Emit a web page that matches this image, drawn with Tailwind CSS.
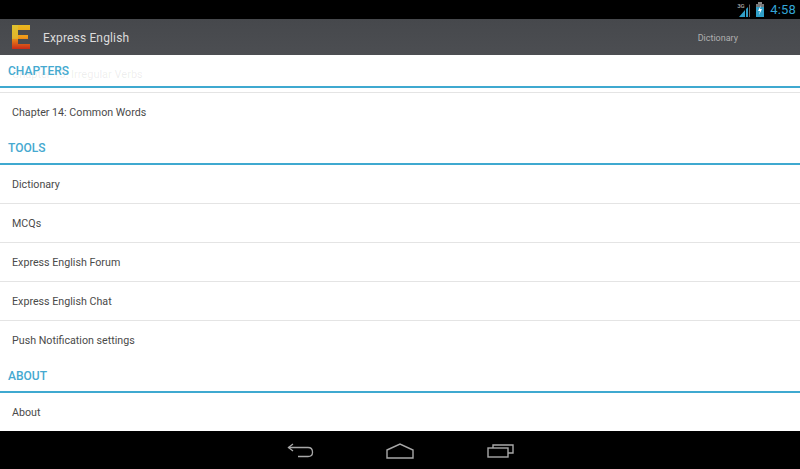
<!DOCTYPE html>
<html>
<head>
<meta charset="utf-8">
<script src="https://cdn.jsdelivr.net/npm/@tailwindcss/browser@4"></script>
</head>
<body class="w-[800px] h-[469px] overflow-hidden bg-white font-['Roboto',sans-serif]">
<div class="flex flex-col h-[469px]">
  <div class="h-[19px] bg-black flex items-center justify-end pr-[4px]">
    <div class="relative w-[14px] h-[16px]">
      <span class="absolute left-0 top-0 text-[6px] leading-[7px] font-bold text-[#999]">3G</span>
      <svg width="14" height="16" viewBox="0 0 14 16" class="absolute inset-0">
        <path d="M2 15 L8 15 L8 8 Z" fill="#2f9fc8"/>
        <path d="M9 15 L9 7 L11 5 L11 15 Z" fill="#2f9fc8"/>
        <path d="M12 15 L12 3 L13 2 L13 15 Z" fill="#666"/>
      </svg>
    </div>
    <svg width="10" height="15" viewBox="0 0 10 15" class="ml-[4px]">
      <rect x="3" y="0" width="4" height="2" fill="#888"/>
      <rect x="1" y="2" width="8" height="3" fill="#777"/>
      <rect x="1" y="5" width="8" height="10" fill="#2f9fc8"/>
      <path d="M6 3 L3 9 L5 9 L4 13 L7 7 L5 7 Z" fill="#fff"/>
    </svg>
    <span class="text-[13px] leading-[19px] text-[#33a5d5] tracking-[0.2px] ml-[5px]">4:58</span>
  </div>
  <div class="h-[36px] bg-gradient-to-b from-[#46484c] to-[#4c4e52] flex items-center">
    <svg width="20" height="26" viewBox="0 0 20 26" class="ml-[11px]">
      <defs>
        <linearGradient id="e" x1="0" y1="0" x2="0" y2="1">
          <stop offset="0" stop-color="#e8b820"/>
          <stop offset="0.5" stop-color="#f09a18"/>
          <stop offset="1" stop-color="#c92a18"/>
        </linearGradient>
      </defs>
      <path d="M1 1 H19 V6 H7 V11 H17 V15 H7 V20 H19 V25 H1 Z" fill="url(#e)"/>
      <path d="M1 1 H7 V15 H1 Z" fill="#d8c838" opacity="0.6"/>
    </svg>
    <span class="ml-[12px] mt-[2px] text-[12px] text-[#dcdcdc] tracking-[0.15px]">Express English</span>
    <span class="ml-auto mr-[62px] mt-[4px] text-[9px] text-[#b0b0b0]">Dictionary</span>
  </div>
  <div class="flex-1 bg-white flex flex-col text-[10.7px] text-[#4a4a4a]">
    <div class="relative h-[33px] border-b-2 border-[#3fa9d0] flex items-center pl-[8px]">
      <span class="absolute left-[12px] top-[12px] text-[11px] text-[#444]/10">Chapter 13: Irregular Verbs</span>
      <span class="relative text-[12px] font-medium text-[#45a9d0]">CHAPTERS</span>
    </div>
    <div class="h-[5px] border-b border-[#e4e4e4]"></div>
    <div class="h-[39px] flex items-center pl-[12px] pt-[2px]">Chapter 14: Common Words</div>
    <div class="h-[33px] border-b-2 border-[#3fa9d0] flex items-center pl-[8px]"><span class="text-[12px] font-medium text-[#45a9d0]">TOOLS</span></div>
    <div class="h-[39px] flex items-center pl-[12px] pt-[2px] border-b border-[#e4e4e4]">Dictionary</div>
    <div class="h-[39px] flex items-center pl-[12px] pt-[2px] border-b border-[#e4e4e4]">MCQs</div>
    <div class="h-[39px] flex items-center pl-[12px] pt-[2px] border-b border-[#e4e4e4]">Express English Forum</div>
    <div class="h-[39px] flex items-center pl-[12px] pt-[2px] border-b border-[#e4e4e4]">Express English Chat</div>
    <div class="h-[39px] flex items-center pl-[12px] pt-[2px]">Push Notification settings</div>
    <div class="h-[33px] border-b-2 border-[#3fa9d0] flex items-center pl-[8px]"><span class="text-[12px] font-medium text-[#45a9d0]">ABOUT</span></div>
    <div class="h-[38px] flex items-center pl-[12px] pt-[2px]">About</div>
  </div>
  <div class="h-[38px] bg-black flex items-center justify-center">
    <div class="w-[260px] flex items-center justify-between pl-[17px] pr-[16px] pt-[1px]">
      <svg width="27" height="15" viewBox="0 0 27 15" fill="none" stroke="#a8a8a8" stroke-width="1.3">
        <path d="M6 1 L1.5 4.5 L6 8"/>
        <path d="M1.5 4.5 H21 Q25.5 4.5 25.5 9 V9.5 Q25.5 13.5 21 13.5 H11"/>
      </svg>
      <svg width="28" height="16" viewBox="0 0 28 16" fill="none" stroke="#a8a8a8" stroke-width="1.4" class="-translate-x-px">
        <path d="M1 7 L14 1 L27 7 V15 H1 Z"/>
      </svg>
      <svg width="27" height="15" viewBox="0 0 27 15" fill="none" stroke="#a8a8a8" stroke-width="1.4">
        <rect x="1" y="5" width="20" height="9"/>
        <path d="M6 5 V2 H26 V10 H21"/>
      </svg>
    </div>
  </div>
</div>
</body>
</html>
